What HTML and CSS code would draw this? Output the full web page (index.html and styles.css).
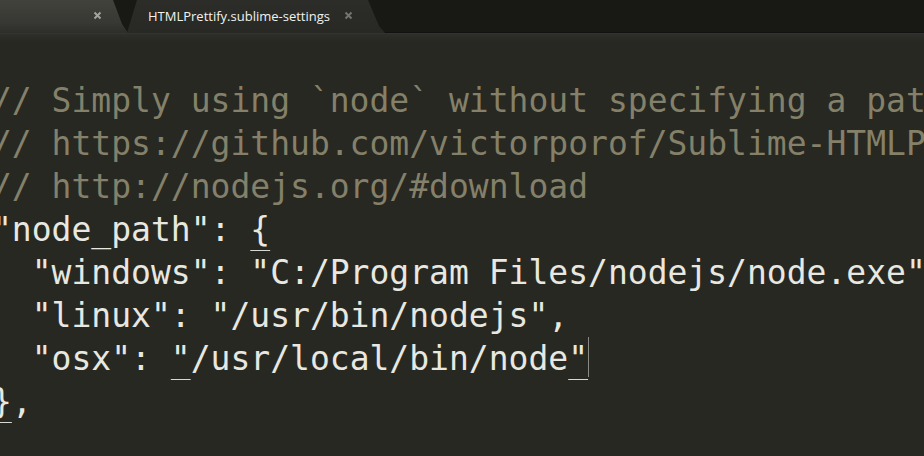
FILE: index.html
```html
<!DOCTYPE html>
<html lang="en">
<head>
    <meta charset="UTF-8">
    <title>HTMLPrettify.sublime-settings</title>
    <link rel="stylesheet" href="styles.css">
</head>
<body>
    <div class="tabbar">
        <div class="tab tab-inactive">
            <span class="tab-name"></span>
            <svg class="tab-close" width="9" height="9" viewBox="0 0 9 9"><path d="M1.5 1.5L7.5 7.5M7.5 1.5L1.5 7.5"/></svg>
        </div>
        <div class="tab tab-active">
            <span class="tab-name">HTMLPrettify.sublime-settings</span>
            <svg class="tab-close" width="9" height="9" viewBox="0 0 9 9"><path d="M1.5 1.5L7.5 7.5M7.5 1.5L1.5 7.5"/></svg>
        </div>
    </div>
    <div class="editor">
<pre class="code"><span class="line"> </span>
<span class="line comment">// Simply using `node` without specifying a path sometimes doesn't work :(</span>
<span class="line comment">// https://github.com/victorporof/Sublime-HTMLPrettify#oh-no-you-broke-it</span>
<span class="line comment">// http://nodejs.org/#download</span>
<span class="line">"node_path": <span class="match">{</span></span>
<span class="line">  "windows": "C:/Program Files/nodejs/node.exe",</span>
<span class="line">  "linux": "/usr/bin/nodejs",</span>
<span class="line">  "osx": <span class="match">"</span>/usr/local/bin/node<span class="match">"</span><span class="caret"></span></span>
<span class="line"><span class="match">}</span>,</span></pre>
    </div>
</body>
</html>
```

FILE: styles.css
```css
html, body {
    margin: 0;
    padding: 0;
    height: 100%;
    overflow: hidden;
    background: #272822;
}
.tabbar {
    display: flex;
    height: 33px;
    background: #181814;
    border-bottom: 1px solid #121210;
    box-sizing: border-box;
}
.tab {
    display: flex;
    align-items: center;
    height: 33px;
    font-family: "Open Sans", "DejaVu Sans", sans-serif;
    font-size: 13px;
}
.tab-inactive {
    width: 128px;
    justify-content: flex-end;
    padding-right: 26px;
    box-sizing: border-box;
    background: linear-gradient(#42423d, #373733 70%, #2d2d29);
    clip-path: polygon(0 0, 113px 0, 122px 24px, 128px 33px, 0 33px);
}
.tab-active {
    width: 258px;
    margin-left: -1px;
    padding-left: 21px;
    box-sizing: border-box;
    background: linear-gradient(#2c2c28, #282824);
    clip-path: polygon(10px 0, 241px 0, 252px 26px, 258px 33px, 0 33px);
}
.tab-name {
    color: #f2f2ee;
    margin-top: -2px;
}
.tab-close {
    fill: none;
    stroke-width: 2;
    margin-top: -3px;
}
.tab-inactive .tab-close {
    stroke: #a3a39e;
}
.tab-active .tab-close {
    stroke: #74746f;
    margin-left: 14px;
}
.editor {
    border-top: 1px solid #34342f;
    background: linear-gradient(#2e2e2a, #272822 8px);
}
.code {
    margin: 0 0 0 -8px;
    padding-top: 2px;
    font-family: "DejaVu Sans Mono", monospace;
    font-size: 33px;
    line-height: 43px;
    color: #e8e8e1;
    white-space: pre;
}
.comment {
    color: #848069;
}
.match {
    text-decoration: underline;
    text-decoration-thickness: 1px;
    text-underline-offset: 9px;
    text-decoration-color: #d8d8d0;
}
.caret {
    display: inline-block;
    width: 0;
    height: 40px;
    vertical-align: top;
    border-left: 1px solid #8a8a84;
}
```
